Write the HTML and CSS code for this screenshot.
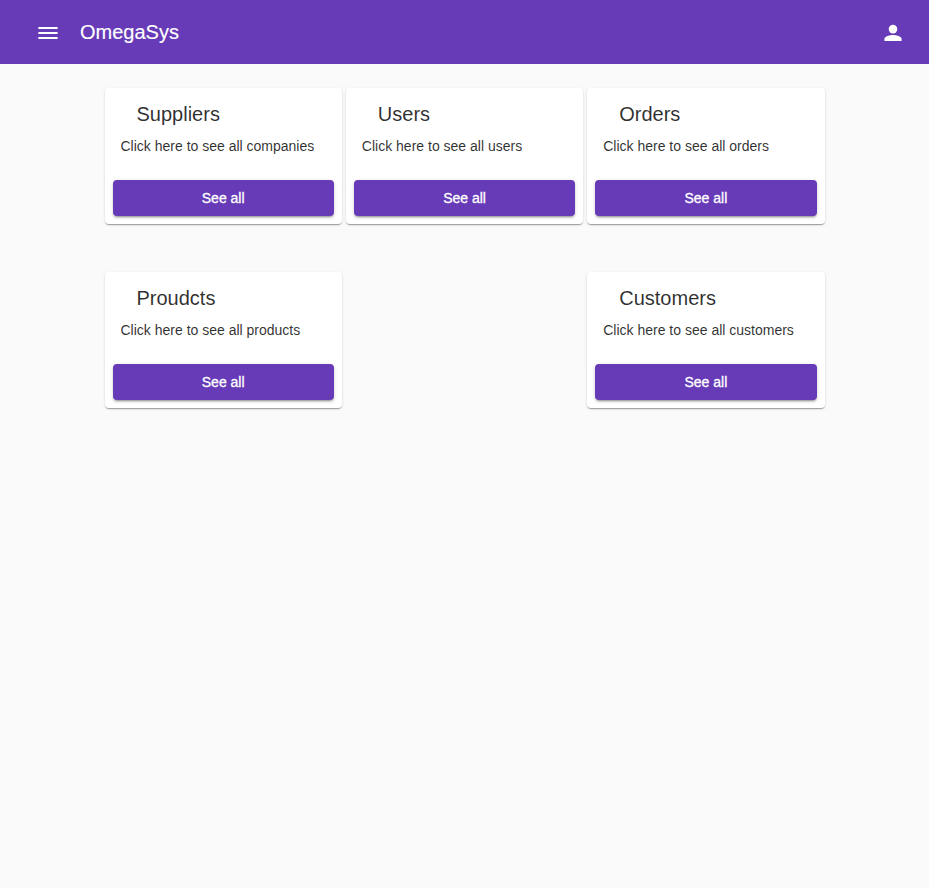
FILE: index.html
```html
<!DOCTYPE html>
<html lang="en">
<head>
<meta charset="utf-8">
<title>OmegaSys</title>
<link rel="stylesheet" href="styles.css">
</head>
<body>
<header class="toolbar">
  <button class="icon-button" aria-label="Menu"><svg viewBox="0 0 24 24"><path d="M2.400 18h19.200v-2H2.400v2zm0-5h19.200v-2H2.400v2zm0-7v2h19.200V6H2.400z"/></svg></button>
  <h1 class="brand">OmegaSys</h1>
  <button class="icon-button account" aria-label="Account"><svg viewBox="0 0 24 24"><circle cx="12" cy="8.100" r="4.300"/><path d="M12 14c-2.900 0-8.600 1.340-8.600 4v2h17.200v-2c0-2.660-5.700-4-8.600-4z"/></svg></button>
</header>
<main class="grid">
  <section class="card"><h2 class="title">Suppliers</h2><p class="text">Click here to see all companies</p><button class="action">See all</button></section>
  <section class="card"><h2 class="title">Users</h2><p class="text">Click here to see all users</p><button class="action">See all</button></section>
  <section class="card"><h2 class="title">Orders</h2><p class="text">Click here to see all orders</p><button class="action">See all</button></section>
  <section class="card"><h2 class="title">Proudcts</h2><p class="text">Click here to see all products</p><button class="action">See all</button></section>
  <section class="card last"><h2 class="title">Customers</h2><p class="text">Click here to see all customers</p><button class="action">See all</button></section>
</main>
</body>
</html>
```
FILE: styles.css
```css
* { box-sizing: border-box; }
body {
  margin: 0;
  min-height: 100vh;
  background: #fafafa;
  color: rgba(0, 0, 0, .82);
  font-family: "Liberation Sans", Arial, sans-serif;
}
button { border: 0; font: inherit; color: inherit; }
.toolbar {
  display: flex;
  align-items: center;
  height: 64px;
  padding: 0 24px;
  background: #673ab7;
  color: #fff;
}
.icon-button {
  display: grid;
  place-items: center;
  width: 48px;
  height: 48px;
  margin-top: 2px;
  padding: 0;
  background: none;
}
.icon-button svg { width: 24px; height: 24px; fill: currentColor; }
.account { margin-left: auto; margin-right: -12px; }
.brand { margin: 0 0 0 8px; font-size: 20px; line-height: 32px; font-weight: 400; -webkit-text-stroke: .15px; }
.grid {
  display: grid;
  grid-template-columns: repeat(3, 1fr);
  gap: 48px 4px;
  width: 720.1px;
  margin: 24px 0 0 104.5px;
}
.card {
  display: flex;
  flex-direction: column;
  height: 136px;
  padding: 10px 8px 8px;
  border-radius: 4px;
  background: #fff;
  box-shadow: 0 2px 1px -1px rgba(0,0,0,.2), 0 1px 1px rgba(0,0,0,.14), 0 1px 3px rgba(0,0,0,.12);
}
.last { grid-column: 3; }
.title { margin: 0 0 0 24px; font-size: 20px; line-height: 32px; font-weight: 400; }
.text { margin: 6px 8px 0; font-size: 14px; line-height: 20px; }
.action {
  height: 36px;
  margin-top: auto;
  border-radius: 4px;
  background: #673ab7;
  color: #fff;
  font-size: 14px;
  line-height: 36px;
  padding: 0;
  -webkit-text-stroke: .3px;
  box-shadow: 0 3px 1px -2px rgba(0,0,0,.2), 0 2px 2px rgba(0,0,0,.14), 0 1px 5px rgba(0,0,0,.12);
}
```
